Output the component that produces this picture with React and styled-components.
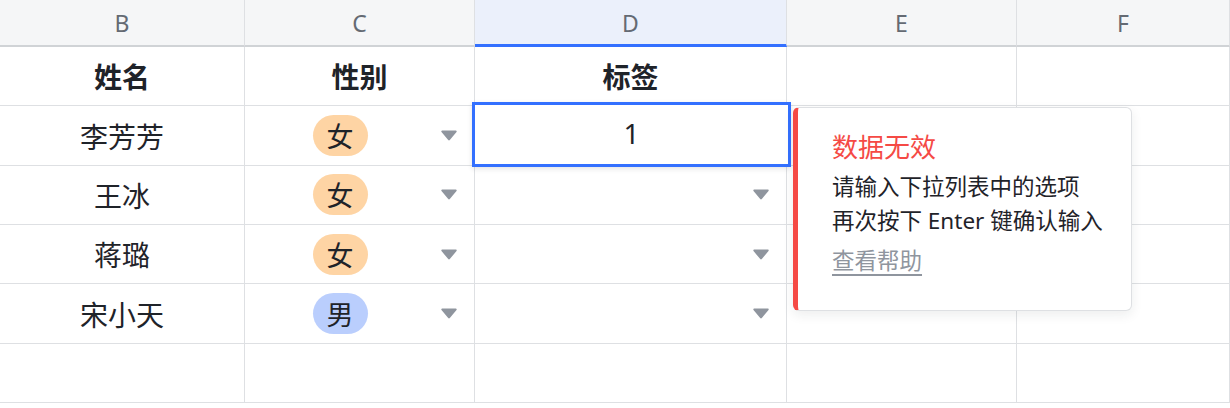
import styled, { createGlobalStyle } from "styled-components";

const GlobalStyle = createGlobalStyle`
    html, body {
        margin: 0;
        padding: 0;
        background: #ffffff;
        overflow: hidden;
    }
    body {
        font-family: "Noto Sans", "Noto Sans CJK SC", sans-serif;
        color: #1f2329;
    }
`;

const columns = ["B", "C", "D", "E", "F"];

const rows = [
    { name: "李芳芳", gender: "女", tag: "1", selected: true },
    { name: "王冰", gender: "女", tag: "" },
    { name: "蒋璐", gender: "女", tag: "" },
    { name: "宋小天", gender: "男", tag: "" },
];

function Caret() {
    return (
        <CaretIcon viewBox="0 0 16 11">
            <path
                d="M1.2 0.5 H14.8 C15.6 0.5 16 1.4 15.5 2 L8.8 10.1 C8.4 10.6 7.6 10.6 7.2 10.1 L0.5 2 C0 1.4 0.4 0.5 1.2 0.5 Z"
                fill="#8f959e"
            />
        </CaretIcon>
    );
}

function App() {
    return (
        <>
            <GlobalStyle />
            <Sheet>
                {columns.map((col) => (
                    <HeaderCell key={col} $active={col === "D"}>
                        {col}
                    </HeaderCell>
                ))}

                <Cell $bold>姓名</Cell>
                <Cell $bold>性别</Cell>
                <Cell $bold>标签</Cell>
                <Cell />
                <Cell />

                {rows.map((row) => (
                    <Row key={row.name} row={row} />
                ))}

                <Cell />
                <Cell />
                <Cell />
                <Cell />
                <Cell />
            </Sheet>
        </>
    );
}

function Row({ row }) {
    return (
        <>
            <Cell>{row.name}</Cell>
            <SelectCell>
                <SelectValue>
                    <Pill $male={row.gender === "男"}>{row.gender}</Pill>
                </SelectValue>
                <Caret />
            </SelectCell>
            {row.selected ? (
                <Cell $raised>
                    <Editor>{row.tag}</Editor>
                    <Tooltip>
                        <TooltipTitle>数据无效</TooltipTitle>
                        <TooltipText>请输入下拉列表中的选项</TooltipText>
                        <TooltipText>再次按下 Enter 键确认输入</TooltipText>
                        <HelpLink>查看帮助</HelpLink>
                    </Tooltip>
                </Cell>
            ) : (
                <SelectCell>
                    <SelectValue />
                    <Caret />
                </SelectCell>
            )}
            <Cell />
            <Cell />
        </>
    );
}

export default App;

const Sheet = styled.div`
    display: grid;
    grid-template-columns: 245px 230px 312px 230px 1fr;
    grid-template-rows: 47px;
    grid-auto-rows: 59.35px;
    width: 1230px;
    height: 408px;
    overflow: hidden;
`;

const HeaderCell = styled.div`
    display: flex;
    align-items: center;
    justify-content: center;
    box-sizing: border-box;
    padding-top: 1px;
    font-size: 23px;
    color: #646a73;
    background-color: ${(p) => (p.$active ? "#ebf0fb" : "#f5f6f7")};
    border-right: 1px solid #dee0e3;
    border-bottom: ${(p) => (p.$active ? "3px solid #3370ff" : "2px solid #d0d3d6")};
`;

const Cell = styled.div`
    position: relative;
    display: flex;
    align-items: center;
    justify-content: center;
    box-sizing: border-box;
    font-size: 28px;
    font-weight: ${(p) => (p.$bold ? 700 : 400)};
    color: #1f2329;
    border-right: 1px solid #dee0e3;
    border-bottom: 1px solid #dee0e3;
    z-index: ${(p) => (p.$raised ? 2 : "auto")};
`;

const SelectCell = styled(Cell)`
    justify-content: space-between;
    padding-right: 17px;
`;

const SelectValue = styled.div`
    flex: 1;
    display: flex;
    justify-content: center;
    padding-right: 6px;
`;

const Pill = styled.span`
    display: inline-flex;
    align-items: center;
    justify-content: center;
    width: 55px;
    height: 41px;
    border-radius: 21px;
    font-size: 27px;
    color: #1f2329;
    background-color: ${(p) => (p.$male ? "#bacefd" : "#fed4a4")};
`;

const CaretIcon = styled.svg`
    width: 16px;
    height: 11px;
    flex-shrink: 0;
`;

const Editor = styled.div`
    position: absolute;
    top: -4px;
    left: -3px;
    right: -5px;
    bottom: -2px;
    display: flex;
    align-items: center;
    justify-content: center;
    box-sizing: border-box;
    border: 3px solid #3370ff;
    background: #ffffff;
    box-shadow: 0 2px 5px rgba(31, 35, 41, 0.12);
    font-size: 28px;
    padding-bottom: 4px;
`;

const Tooltip = styled.div`
    position: absolute;
    top: 1px;
    left: calc(100% + 7px);
    width: 339px;
    height: 204px;
    box-sizing: border-box;
    padding: 22px 16px 0 34px;
    background: #ffffff;
    border: 1px solid #dee0e3;
    border-left: 5px solid #f54a45;
    border-radius: 6px;
    box-shadow: 0 4px 12px rgba(31, 35, 41, 0.08);
`;

const TooltipTitle = styled.div`
    font-size: 26px;
    line-height: 34px;
    color: #f54a45;
    margin-bottom: 6px;
`;

const TooltipText = styled.div`
    font-size: 22.5px;
    line-height: 33.5px;
    color: #1f2329;
    white-space: nowrap;
`;

const HelpLink = styled.a`
    display: inline-block;
    margin-top: 8px;
    font-size: 22.5px;
    line-height: 32px;
    color: #8f959e;
    text-decoration: underline;
    text-underline-offset: 5px;
    cursor: pointer;
`;
